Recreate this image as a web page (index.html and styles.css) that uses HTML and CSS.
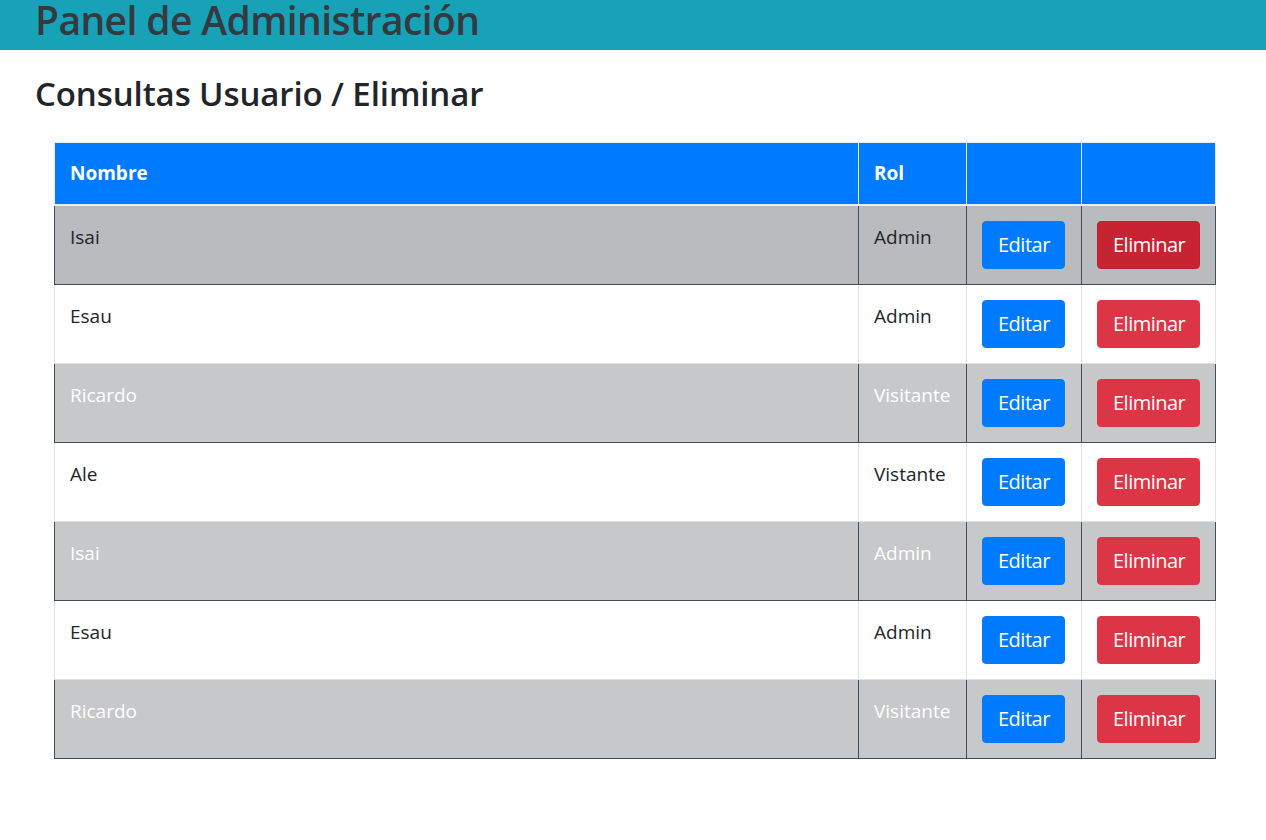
FILE: index.html
```html
<!DOCTYPE html>
<html lang="es">
<head>
<meta charset="utf-8">
<title>Panel de Administración</title>
<link rel="stylesheet" href="styles.css">
</head>
<body>
<header class="topbar">
  <h1 class="topbar-title">Panel de Administración</h1>
</header>
<main class="content">
  <h2 class="page-title">Consultas Usuario / Eliminar</h2>
  <table class="users">
    <thead>
      <tr>
        <th class="col-name">Nombre</th>
        <th class="col-rol">Rol</th>
        <th class="col-edit"></th>
        <th class="col-del"></th>
      </tr>
    </thead>
    <tbody>
      <tr class="row-hover">
        <td class="cell-text">Isai</td><td class="cell-text">Admin</td>
        <td class="cell-btn"><button class="btn btn-edit">Editar</button></td>
        <td class="cell-btn"><button class="btn btn-del btn-del-hover">Eliminar</button></td>
      </tr>
      <tr class="row-light">
        <td class="cell-text">Esau</td><td class="cell-text">Admin</td>
        <td class="cell-btn"><button class="btn btn-edit">Editar</button></td>
        <td class="cell-btn"><button class="btn btn-del">Eliminar</button></td>
      </tr>
      <tr class="row-gray">
        <td class="cell-text">Ricardo</td><td class="cell-text">Visitante</td>
        <td class="cell-btn"><button class="btn btn-edit">Editar</button></td>
        <td class="cell-btn"><button class="btn btn-del">Eliminar</button></td>
      </tr>
      <tr class="row-light">
        <td class="cell-text">Ale</td><td class="cell-text">Vistante</td>
        <td class="cell-btn"><button class="btn btn-edit">Editar</button></td>
        <td class="cell-btn"><button class="btn btn-del">Eliminar</button></td>
      </tr>
      <tr class="row-gray">
        <td class="cell-text">Isai</td><td class="cell-text">Admin</td>
        <td class="cell-btn"><button class="btn btn-edit">Editar</button></td>
        <td class="cell-btn"><button class="btn btn-del">Eliminar</button></td>
      </tr>
      <tr class="row-light">
        <td class="cell-text">Esau</td><td class="cell-text">Admin</td>
        <td class="cell-btn"><button class="btn btn-edit">Editar</button></td>
        <td class="cell-btn"><button class="btn btn-del">Eliminar</button></td>
      </tr>
      <tr class="row-gray">
        <td class="cell-text">Ricardo</td><td class="cell-text">Visitante</td>
        <td class="cell-btn"><button class="btn btn-edit">Editar</button></td>
        <td class="cell-btn"><button class="btn btn-del">Eliminar</button></td>
      </tr>
    </tbody>
  </table>
</main>
</body>
</html>
```
FILE: styles.css
```css
* { box-sizing: border-box; }

body {
  margin: 0;
  font-family: "Open Sans", "Noto Sans", "Liberation Sans", sans-serif;
  color: #212529;
  background: #fff;
}

.topbar {
  height: 50px;
  background: #17a2b8;
  padding-left: 35px;
}

.topbar-title {
  margin: 0;
  font-size: 39px;
  line-height: 40px;
  font-weight: 600;
  color: #343a40;
  letter-spacing: -0.6px;
  white-space: nowrap;
}

.content {
  padding: 0 50px 0 35px;
}

.page-title {
  margin: 25px 0 29px;
  font-size: 33px;
  line-height: 38px;
  font-weight: 600;
  color: #212529;
  letter-spacing: -0.1px;
}

.users {
  margin-left: 19px;
  width: 1162px;
  border-collapse: collapse;
  font-size: 19px;
  line-height: 27px;
}

.users th,
.users td {
  padding: 15px;
  text-align: left;
  vertical-align: top;
  border: 1px solid #dee2e6;
}

.users thead th {
  background: #007bff;
  color: #fff;
  font-weight: 700;
  padding: 17px 15px 17px;
  border-color: #e9ecef;
  border-bottom: 2px solid #e9ecef;
}

.col-name { width: 805px; }
.col-rol { width: 108px; }
.col-edit { width: 115px; }
.col-del { width: 134px; }

.users .cell-text {
  padding-top: 18px;
}

.users .cell-btn {
  padding-top: 15px;
  padding-bottom: 15px;
}

.row-hover td {
  background: #b9bbbe;
  color: #212529;
  border-color: #454d55;
}

.row-gray td {
  background: #c6c8ca;
  color: #fff;
  border-color: #454d55;
}

.row-light td {
  background: #fff;
  color: #212529;
}

.btn {
  display: inline-block;
  height: 48px;
  margin: 0;
  border: 1px solid transparent;
  border-radius: 4px;
  padding: 0 15px;
  font-family: inherit;
  font-size: 20px;
  line-height: 46px;
  color: #fff;
  letter-spacing: -0.5px;
  cursor: pointer;
}

.btn-edit {
  width: 83px;
  background: #007bff;
  border-color: #007bff;
}

.btn-del {
  width: 103px;
  background: #dc3545;
  border-color: #dc3545;
}

.btn-del-hover {
  background: #c82333;
  border-color: #bd2130;
}
```
